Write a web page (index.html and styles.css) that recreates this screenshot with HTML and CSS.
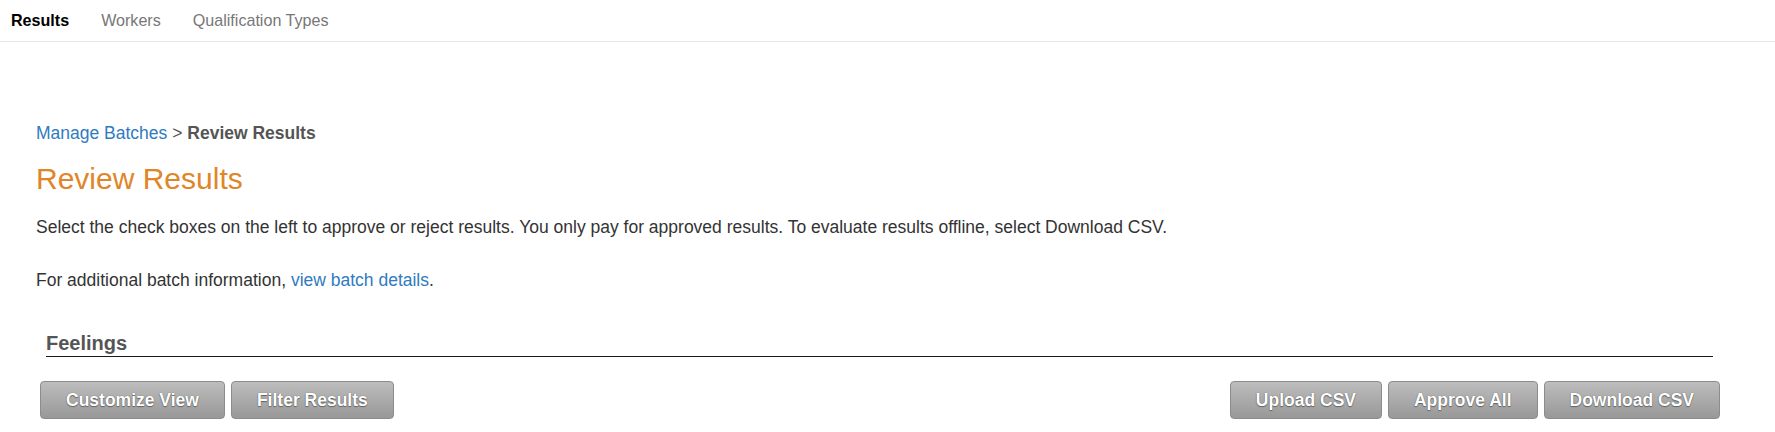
FILE: index.html
```html
<!DOCTYPE html>
<html>
<head>
<meta charset="utf-8">
<title>Review Results</title>
<link rel="stylesheet" href="styles.css">
</head>
<body>
<nav class="topnav">
  <a class="nav-item active" href="#">Results</a>
  <a class="nav-item" href="#">Workers</a>
  <a class="nav-item" href="#">Qualification Types</a>
</nav>
<main class="main">
  <div class="breadcrumb"><a href="#" class="link">Manage Batches</a> &gt; <strong>Review Results</strong></div>
  <h1 class="title">Review Results</h1>
  <p class="text p1">Select the check boxes on the left to approve or reject results. You only pay for approved results. To evaluate results offline, select Download CSV.</p>
  <p class="text p2">For additional batch information, <a href="#" class="link">view batch details</a>.</p>
  <h2 class="section-title">Feelings</h2>
  <div class="toolbar">
    <div class="btn-group">
      <button class="btn">Customize View</button>
      <button class="btn">Filter Results</button>
    </div>
    <div class="btn-group">
      <button class="btn">Upload CSV</button>
      <button class="btn">Approve All</button>
      <button class="btn">Download CSV</button>
    </div>
  </div>
</main>
</body>
</html>
```

FILE: styles.css
```css
* { box-sizing: border-box; }
html, body { margin: 0; padding: 0; background: #fff; }
body {
  font-family: "Liberation Sans", Arial, sans-serif;
  color: #333;
  font-size: 17.5px;
}
.topnav {
  display: flex;
  align-items: center;
  gap: 32px;
  height: 42px;
  padding: 0 0 0 11px;
  border-bottom: 1px solid #e8e8e8;
  font-size: 16.1px;
}
.nav-item { color: #777; text-decoration: none; }
.nav-item.active { color: #000; font-weight: bold; }

.main { padding: 0 55px 0 36px; }
.breadcrumb {
  margin-top: 81px;
  line-height: 20px;
  color: #555;
}
.breadcrumb strong { color: #555; }
.link { color: #2f7bbf; text-decoration: none; }
.title {
  margin: 19px 0 0;
  font-size: 30px;
  line-height: 34px;
  font-weight: normal;
  color: #df8628;
}
.text { margin: 0; line-height: 20px; color: #333; }
.p1 { margin-top: 21px; }
.p2 { margin-top: 33px; }
.section-title {
  margin: 40px 7px 0 10px;
  font-size: 20px;
  line-height: 26px;
  font-weight: bold;
  color: #555;
  border-bottom: 1px solid #1a1a1a;
}
.toolbar {
  display: flex;
  justify-content: space-between;
  margin: 24px 0 0 4px;
}
.btn-group { display: flex; gap: 6px; }
.btn {
  height: 38px;
  padding: 0 25px;
  font-family: "Liberation Sans", Arial, sans-serif;
  font-size: 17.5px;
  font-weight: bold;
  color: #fff;
  text-shadow: 0 0 1px #555, 0 1px 1px #666;
  background: linear-gradient(#bdbdbd, #989898);
  border: 1px solid #8c8c8c;
  border-radius: 4px;
  cursor: pointer;
}
```
